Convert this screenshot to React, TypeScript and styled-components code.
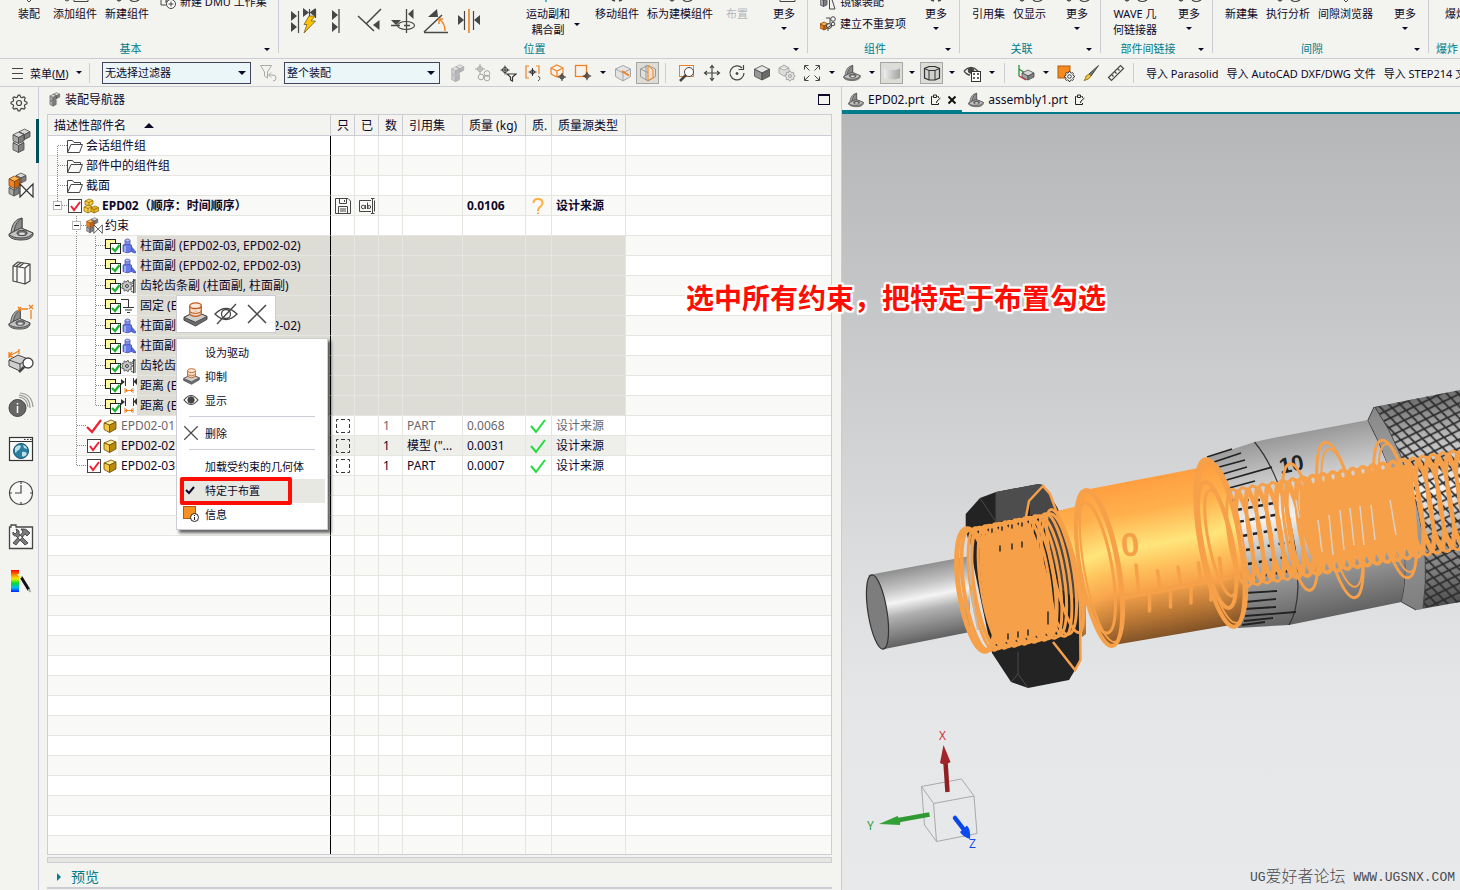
import React from 'react';
import styled, { createGlobalStyle, css } from 'styled-components';

const c = {
  bg: '#f3f4ef',
  line: '#cbccd4',
  grid: '#e6e6e1',
  ink: '#0d0828',
  teal: '#007c8c',
  select: '#dddcd5',
  orange: '#f6a04a',
  icon: '#464646',
};

const Global = createGlobalStyle`
  * { box-sizing: border-box; }
  body { margin: 0; background: ${c.bg}; }
  body, button, select, input, table {
    font-family: "Noto Sans", "Noto Sans CJK SC", sans-serif;
    color: ${c.ink};
  }
  button { border: 0; background: none; padding: 0; margin: 0; font-size: 11px; }
  svg { display: block; flex: none; }
`;

const Shell = styled.div`
  position: relative;
  display: flex;
  flex-direction: column;
  height: 100vh;
  overflow: hidden;
`;

/* ---------- small drawing helpers ---------- */

type IcoProps = { w?: number; h?: number; vb?: string; children: React.ReactNode };
const Ico = ({ w = 18, h, vb, children }: IcoProps) => (
  <svg width={w} height={h ?? w} viewBox={vb ?? `0 0 ${w} ${h ?? w}`} fill="none" stroke={c.icon} strokeWidth="1" aria-hidden="true">
    {children}
  </svg>
);

type IsoProps = { x: number; y: number; w: number; h: number; top?: string; left?: string; right?: string; line?: string };
const Iso = ({ x, y, w, h, top = '#d9d9d9', left = '#a9a9a9', right = '#7f7f7f', line = '#4a4a4a' }: IsoProps) => {
  const q = w / 4;
  const m = x + w / 2;
  return (
    <g stroke={line} strokeWidth="0.8" strokeLinejoin="round">
      <polygon fill={top} points={`${x},${y + q} ${m},${y} ${x + w},${y + q} ${m},${y + 2 * q}`} />
      <polygon fill={left} points={`${x},${y + q} ${m},${y + 2 * q} ${m},${y + 2 * q + h} ${x},${y + q + h}`} />
      <polygon fill={right} points={`${x + w},${y + q} ${m},${y + 2 * q} ${m},${y + 2 * q + h} ${x + w},${y + q + h}`} />
    </g>
  );
};

const amber = { top: '#ffb24d', left: '#f58220', right: '#c9620c', line: '#7a4a1c' };
const gold = { top: '#ffe88a', left: '#f7c32e', right: '#b98508', line: '#6e4d05' };
const pale = { top: '#e3e3e3', left: '#cccccc', right: '#b5b5b5', line: '#a6a6a6' };

/* an upright column of two blocks with a third behind it at the top */
const BlockArt = ({ tone }: { tone?: typeof pale }) => (
  <g>
    <Iso x={11} y={1} w={11} h={5} {...tone} />
    <Iso x={5} y={12} w={11} h={7} {...tone} />
    <Iso x={5} y={4} w={11} h={6} {...tone} />
  </g>
);
const Blocks = ({ w = 26 }: { w?: number }) => (
  <Ico w={w} vb="0 0 26 26"><BlockArt /></Ico>
);

const ConstraintArt = ({ w = 26 }: { w?: number }) => (
  <Ico w={w} vb="0 0 26 26">
    <Iso x={8} y={1} w={10} h={5} />
    <Iso x={1} y={13} w={10} h={6} />
    <Iso x={1} y={4} w={11} h={7} {...amber} />
    <path d="M12 12V25L25 12V25Z" fill="#fff" stroke="#333" strokeWidth="1.2" />
  </Ico>
);

const BracketArt = () => (
  <g stroke="#4a4a4a" strokeLinejoin="round">
    <path d="M3 18C3 10 7 4 11 3L14 2V13L5 19Z" fill="#a9a9a9" />
    <path d="M6 18C6 11 9 5 14 2V13Z" fill="#8b8b8b" />
    <path d="M1 18L13 12L25 17V19Q23 24 13 24Q4 24 1 20Z" fill="#8c8c8c" />
    <path d="M1 18L13 12L25 17Q22 22 13 22Q4 22 1 18Z" fill="#c4c4c4" />
    <ellipse cx="14" cy="17" rx="5" ry="2.6" fill="#6d6d6d" />
    <ellipse cx="14" cy="17.8" rx="3" ry="1.3" fill="#ddd" stroke="none" />
  </g>
);
const Bracket = ({ w = 26 }: { w?: number }) => (
  <Ico w={w} vb="0 0 26 26"><BracketArt /></Ico>
);

const gearPath = (cx: number, cy: number, r: number, n = 8) => {
  const pts: string[] = [];
  for (let i = 0; i < n * 4; i++) {
    const a = ((i - 0.5) / (n * 4)) * Math.PI * 2;
    const rr = i % 4 < 2 ? r : r * 0.76;
    pts.push(`${(cx + rr * Math.cos(a)).toFixed(2)},${(cy + rr * Math.sin(a)).toFixed(2)}`);
  }
  return pts.join(' ');
};

const Target = ({ x, y, r = 3 }: { x: number; y: number; r?: number }) => (
  <g stroke="#333">
    <circle cx={x} cy={y} r={r} />
    <path d={`M${x - r - 2} ${y}H${x + r + 2}M${x} ${y - r - 2}V${y + r + 2}`} />
  </g>
);

/* ---------- ribbon ---------- */

const Ribbon = styled.header`
  display: flex;
  flex: none;
  height: 59px;
  border-bottom: 1px solid ${c.line};
  overflow: hidden;
`;
const Group = styled.section<{ $w?: number }>`
  position: relative;
  flex: ${p => (p.$w ? `0 0 ${p.$w}px` : '1 0 90px')};
  display: flex;
  flex-direction: column;
  &::after {
    content: '';
    position: absolute;
    right: 0;
    top: 0;
    height: 53px;
    border-right: 1px solid ${c.line};
  }
`;
const GroupBody = styled.div<{ $pad?: number }>`
  display: flex;
  height: 41px;
  padding: 0 4px 0 ${p => p.$pad ?? 8}px;
`;
const GroupFoot = styled.div`
  display: flex;
  align-items: center;
  height: 16px;
  padding-right: 7px;
`;
const GroupName = styled.h2`
  flex: 1;
  margin: 0;
  text-align: center;
  font-size: 11px;
  font-weight: 400;
  line-height: 16px;
  white-space: nowrap;
  color: ${c.teal};
`;
const Tri = styled.i`
  display: block;
  flex: none;
  border: 3px solid transparent;
  border-top-color: ${c.ink};
  border-bottom-width: 0;
  align-self: center;
`;
const FootTri = styled(Tri)`
  margin: 0 2px 0 3px;
`;
const Tool = styled.button<{ $last?: boolean; $off?: boolean }>`
  display: flex;
  flex-direction: column;
  align-items: center;
  min-width: 40px;
  height: 41px;
  padding: 0 4px;
  line-height: 16px;
  white-space: nowrap;
  color: ${p => (p.$off ? '#b4b4bb' : c.ink)};
  margin-left: ${p => (p.$last ? 'auto' : 0)};
  svg { height: 6px; }
`;
const ToolArrow = styled(Tri)`
  margin-top: 5px;
`;
const SideArrow = styled(Tri)`
  margin: 8px 11px 0 0;
`;
const Stack = styled.div<{ $gap: number }>`
  display: flex;
  flex-direction: column;
  padding-left: ${p => p.$gap}px;
  margin-top: -6px;
`;
const SmallTool = styled.button`
  display: flex;
  align-items: center;
  gap: 4px;
  height: 16px;
  line-height: 16px;
  white-space: nowrap;
  & + & { margin-top: 6px; }
`;
const ConstraintTools = styled.div`
  display: flex;
  gap: 6px;
  padding: 8px 40px 0 0;
  height: 36px;
  button { width: 27px; height: 26px; display: flex; justify-content: center; }
`;

const Stub = ({ kind }: { kind: 'none' | 'arrow' | 'box' | 'round' | 'arrowBox' | 'blue' | 'dots' }) => (
  <svg width="30" height="6" viewBox="0 0 30 6" fill="none" stroke="#444" aria-hidden="true">
    {kind === 'arrow' && <path d="M13 0L15 2L17 0" />}
    {kind === 'box' && <path d="M11 0V1.500H26V0" />}
    {kind === 'arrowBox' && <path d="M5 0L7 1L9 0M14 0V1.500H28V0" />}
    {kind === 'round' && <path d="M5 0L7 1L9 0M18 0Q22 3 27 0" strokeWidth="1.2" />}
    {kind === 'blue' && <path d="M13 0V2" stroke="#1ba3c6" strokeWidth="1.5" />}
    {kind === 'dots' && <path d="M10 0L13 1M17 1L20 0" strokeWidth="1.5" />}
  </svg>
);

const PLAY = '#474747';
const constraintArt = [
  <Ico key="a" w={26} h={26}>
    <g fill={PLAY} stroke="none">
      <path d="M0 3L6 8L0 13ZM0 14L6 19L0 24ZM12 0L18 4.500L12 9ZM24.500 0L18.500 4.500L24.500 9Z" />
    </g>
    <path d="M7.500 3V25M18.500 1V12M24.500 1V10" stroke={PLAY} strokeWidth="1.2" />
    <path d="M18 8H24L20 13H24.500L13 25L16 16.500H13Z" fill="#ffc400" stroke="#7a5c1a" strokeWidth="0.8" />
  </Ico>,
  <Ico key="b" w={12} h={26}>
    <path d="M1 2L7 7L1 12ZM1 14L7 19L1 24Z" fill={PLAY} stroke="none" />
    <path d="M8 1V25" stroke={PLAY} strokeWidth="1.3" />
  </Ico>,
  <Ico key="c" w={26} h={26}>
    <path d="M1 8L17 23M9 16L24 1" stroke={PLAY} strokeWidth="1.5" />
    <path d="M16 17L22.500 12V22Z" fill={PLAY} stroke="none" />
  </Ico>,
  <Ico key="d" w={26} h={26}>
    <path d="M16.500 1V25M1 17.500H10M14 17.500H20" stroke={PLAY} strokeWidth="1.3" />
    <ellipse cx="16" cy="17.500" rx="8.500" ry="4" stroke={PLAY} strokeWidth="1.2" />
    <path d="M23.500 1V11L18 6ZM1 12H11L6 17Z" fill={PLAY} stroke="none" />
  </Ico>,
  <Ico key="e" w={26} h={26}>
    <path d="M1 24.500H25M1 24L19 7" stroke={PLAY} strokeWidth="1.5" />
    <path d="M5 9L14 1L15 9Z" fill={PLAY} stroke="none" />
    <path d="M22 23C22 18 20 14 17 12M16 16V11H20" stroke="#f08020" strokeWidth="1.4" />
  </Ico>,
  <Ico key="f" w={26} h={26}>
    <path d="M2 7L8 12L2 17ZM24 7L18 12L24 17Z" fill={PLAY} stroke="none" />
    <path d="M8.500 3V22M17.500 3V22" stroke={PLAY} strokeWidth="1.2" />
    <path d="M13 1V25" stroke="#f08020" strokeWidth="1.6" />
  </Ico>,
];

const More = ({ kind = 'dots' }: { kind?: 'none' | 'box' | 'round' | 'dots' }) => (
  <Tool $last>
    <Stub kind={kind} />
    更多
    <ToolArrow />
  </Tool>
);

const Foot = ({ name }: { name: string }) => (
  <GroupFoot>
    <GroupName>{name}</GroupName>
    <FootTri />
  </GroupFoot>
);

const BoomName = styled(GroupName)`
  text-align: left;
  padding-left: 7px;
`;

const RibbonBar = () => (
  <Ribbon>
    <Group $w={279}>
      <GroupBody $pad={9}>
        <Tool><Stub kind="arrow" />装配</Tool>
        <Tool><Stub kind="arrowBox" />添加组件</Tool>
        <Tool><Stub kind="round" />新建组件</Tool>
        <Stack $gap={7}>
          <SmallTool>
            <Ico w={16}>
              <path d="M1 6V11H6M6 5V9M6 7H10" />
              <circle cx="11" cy="10" r="4.500" fill="#fff" />
              <path d="M8.500 10H13.500M11 7.500V12.500" />
            </Ico>
            新建 DMU 工作集
          </SmallTool>
        </Stack>
      </GroupBody>
      <Foot name="基本" />
    </Group>
    <Group $w={529}>
      <GroupBody $pad={11}>
        <ConstraintTools>
          {constraintArt.map((a, i) => <button key={i} aria-label={`约束 ${i + 1}`}>{a}</button>)}
        </ConstraintTools>
        <Tool><Stub kind="blue" />运动副和<span>耦合副</span></Tool>
        <SideArrow />
        <Tool><Stub kind="dots" />移动组件</Tool>
        <Tool><Stub kind="round" />标为建模组件</Tool>
        <Tool $off><Stub kind="none" />布置</Tool>
        <More kind="box" />
      </GroupBody>
      <Foot name="位置" />
    </Group>
    <Group $w={152}>
      <GroupBody>
        <Stack $gap={4}>
          <SmallTool>
            <Ico w={16}>
              <Iso x={0} y={3} w={7} h={6} />
              <path d="M9.500 2V15L15 15L11.500 4" />
            </Ico>
            镜像装配
          </SmallTool>
          <SmallTool>
            <Ico w={16}>
              <Iso x={0} y={6} w={8} h={4} {...amber} />
              <circle cx="9" cy="10" r="2.500" fill="#ddd" />
              <circle cx="13" cy="3" r="2.300" />
              <circle cx="13" cy="8" r="1.800" />
              <path d="M6 2H10V7M7 12L12 9M8 13V15" />
            </Ico>
            建立不重复项
          </SmallTool>
        </Stack>
        <More />
      </GroupBody>
      <Foot name="组件" />
    </Group>
    <Group $w={141}>
      <GroupBody>
        <Tool><Stub kind="none" />引用集</Tool>
        <Tool><Stub kind="round" />仅显示</Tool>
        <More kind="round" />
      </GroupBody>
      <Foot name="关联" />
    </Group>
    <Group $w={112}>
      <GroupBody>
        <Tool><Stub kind="round" />WAVE 几<span>何链接器</span></Tool>
        <More kind="round" />
      </GroupBody>
      <Foot name="部件间链接" />
    </Group>
    <Group $w={216}>
      <GroupBody>
        <Tool><Stub kind="none" />新建集</Tool>
        <Tool><Stub kind="round" />执行分析</Tool>
        <Tool><Stub kind="arrow" />间隙浏览器</Tool>
        <More kind="none" />
      </GroupBody>
      <Foot name="间隙" />
    </Group>
    <Group>
      <GroupBody $pad={12}>
        <Tool><Stub kind="arrow" />爆炸图</Tool>
      </GroupBody>
      <GroupFoot>
        <BoomName>爆炸</BoomName>
      </GroupFoot>
    </Group>
  </Ribbon>
);

/* ---------- selection toolbar ---------- */

const Bar = styled.nav`
  display: flex;
  align-items: center;
  flex: none;
  height: 28px;
  border-bottom: 1px solid ${c.line};
  overflow: hidden;
`;
const Rule = styled.i<{ $l?: number; $r?: number }>`
  flex: none;
  width: 1px;
  height: 20px;
  background: ${c.line};
  margin: 0 ${p => p.$r ?? 8}px 0 ${p => p.$l ?? 5}px;
`;
const MenuButton = styled.button`
  display: flex;
  align-items: center;
  gap: 7px;
  width: 89px;
  flex: none;
  padding-left: 12px;
  white-space: nowrap;
`;
const Pick = styled.label<{ $w: number }>`
  position: relative;
  flex: none;
  width: ${p => p.$w}px;
  ${Tri} {
    position: absolute;
    right: 5px;
    top: 9px;
    border-width: 4px 4px 0;
    pointer-events: none;
  }
`;
const Select = styled.select`
  display: block;
  appearance: none;
  width: 100%;
  height: 22px;
  padding: 0 16px 0 2px;
  border: 1px solid #44435f;
  border-radius: 0;
  background: #eaf6f8;
  font-size: 11px;
`;
const FilterButton = styled.button`
  flex: none;
  display: flex;
  align-items: center;
  justify-content: center;
  width: 33px;
  height: 22px;
`;
const IconBtn = styled.button<{ $on?: boolean }>`
  display: flex;
  flex: none;
  align-items: center;
  justify-content: center;
  width: 23px;
  height: 22px;
  margin: 0 1px;
  ${p => p.$on && css`
    background: ${c.select};
    border: 1px solid #a5a6a8;
  `}
`;
const Drop = styled.button`
  display: flex;
  flex: none;
  justify-content: center;
  width: 15px;
  height: 22px;
`;
const TextBtn = styled.button`
  flex: none;
  margin-left: 8px;
  white-space: nowrap;
`;
const Spacer = styled.i`
  flex: none;
  width: 5px;
`;

const I = ({ n, on, children }: { n: string; on?: boolean; children: React.ReactNode }) => (
  <IconBtn aria-label={n} $on={on}><Ico>{children}</Ico></IconBtn>
);
const D = ({ n }: { n: string }) => <Drop aria-label={n}><Tri /></Drop>;

const hex = 'M9 1.500L16.500 5V12.500L9 17L1.500 12.500V5Z';

const Toolbar = () => (
  <Bar>
    <MenuButton>
      <Ico w={11} h={12}><path d="M0 1.500H11M0 6.500H11M0 11.500H11" /></Ico>
      <span>菜单(<u>M</u>)</span>
      <Tri />
    </MenuButton>
    <Rule $l={0} $r={12} />
    <Pick $w={149}>
      <Select aria-label="选择过滤器"><option>无选择过滤器</option></Select>
      <Tri />
    </Pick>
    <FilterButton aria-label="重置过滤器">
      <Ico>
        <path d="M1.500 1.500H12.500L8.500 8V14L5.500 12V8Z" stroke="#a9a9a9" />
        <path d="M10 11H14Q17 11 17 14T14 17M12 8.500L9.500 11L12 13.500" stroke="#a9a9a9" />
      </Ico>
    </FilterButton>
    <Pick $w={156}>
      <Select aria-label="选择范围"><option>整个装配</option></Select>
      <Tri />
    </Pick>
    <Spacer />
    <I n="块"><g transform="translate(-1 0) scale(.72)"><BlockArt tone={pale} /></g></I>
    <I n="相交">
      <g stroke="#a4a4a4"><circle cx="6" cy="5" r="2.500" /><path d="M1 5H11M6 0V10" /><circle cx="7" cy="13" r="2.800" /><circle cx="13" cy="9.500" r="2.800" /><circle cx="13" cy="14" r="2.800" /></g>
    </I>
    <I n="点过滤器"><Target x={6} y={6} r={2.5} /><path d="M8 10H17L13.500 13V17L11.500 16V13Z" fill="#fff" stroke="#333" strokeWidth="1.2" /></I>
    <I n="区域"><path d="M5 2H2V14H5M12 2H15V10" stroke="#f08020" strokeWidth="1.2" /><Target x={8.5} y={8} r={2} /><path d="M14 12Q18 14 14 17" /></I>
    <I n="体"><path d="M8 1L14 4V10L8 13L2 10V4ZM2 4L8 7L14 4M8 7V13" stroke="#f08020" strokeWidth="1.2" /><Target x={13} y={13} r={2} /></I>
    <I n="矩形"><rect x="1.500" y="1.500" width="11" height="11" stroke="#f08020" strokeWidth="1.3" /><Target x={13} y={12} r={2.2} /></I>
    <D n="矩形选项" />
    <I n="剖切"><path d={hex} fill="#e4e4e4" stroke="#a5a5a5" /><path d="M1.500 5L9 9L16.500 5M9 9V17" stroke="#a5a5a5" /><path d="M8 7L15 11.500" stroke="#f08020" strokeWidth="2" /></I>
    <I n="编辑剖切" on><path d={hex} fill="#e0e0dc" stroke="#999" /><path d="M1.500 5L9 8.500M7 1V16" stroke="#999" /><path d="M9 1.500L14 6V14L9 16.500Z" stroke="#f08020" fill="#efe0d0" /></I>
    <Rule />
    <I n="缩放"><rect x="1.500" y="1.500" width="14" height="11" stroke="#f08020" /><circle cx="11" cy="8" r="4.500" fill="#fff" /><path d="M8 11L2 17" strokeWidth="2.500" /></I>
    <I n="平移"><path d="M9 1.500V16.500M1.500 9H16.500M7 4L9 1.500L11 4M7 14L9 16.500L11 14M4 7L1.500 9L4 11M14 7L16.500 9L14 11" strokeWidth="1.2" /></I>
    <I n="旋转"><path d="M14 4A7 7 0 1 0 16 9M10.500 5.500H15.500V1" strokeWidth="1.2" /><circle cx="9" cy="9.500" r="1" fill="#444" /></I>
    <I n="视图"><Iso x={1.5} y={1.5} w={15} h={7} top="#e6e6e6" left="#979797" right="#6b6b6b" /></I>
    <I n="视图设置"><path d="M6 1L11 4V9L6 12L1 9V4ZM1 4L6 6L11 4" stroke="#a9a9a9" fill="#ddd" /><polygon points={gearPath(12, 12, 5)} stroke="#a4a4a4" fill="#e4e4e4" /><circle cx="12" cy="12" r="1.500" stroke="#a4a4a4" /></I>
    <I n="适合窗口"><path d="M1.500 5.500V1.500H5.500M12.500 1.500H16.500V5.500M16.500 12.500V16.500H12.500M5.500 16.500H1.500V12.500M2 2L6.500 6.500M16 2L11.500 6.500M16 16L11.500 11.500M2 16L6.500 11.500" /></I>
    <D n="适合窗口选项" />
    <I n="部件"><g transform="scale(.69)"><BracketArt /></g></I>
    <D n="部件选项" />
    <I n="着色" on>
      <path d="M1 4V14Q9 17 17 14V4Z" fill="url(#shade)" stroke="none" />
      <ellipse cx="9" cy="4" rx="8" ry="2" fill="#dcdcdc" stroke="none" />
      <defs><linearGradient id="shade"><stop stopColor="#ededed" /><stop offset="1" stopColor="#a2a2a2" /></linearGradient></defs>
    </I>
    <D n="着色选项" />
    <I n="边" on><path d="M1.500 4.500V14L6 16H12L16.500 14V4.500L12 2.500H6Z" fill="#d0d0cc" stroke="#333" strokeWidth="1.2" /><path d="M1.500 4.500L6 6.500H12L16.500 4.500M6 6.500V16M12 6.500V16" stroke="#333" /></I>
    <D n="边选项" />
    <I n="显示隐藏"><path d="M1 7Q8 0 15 7M1 7Q4 11 7 11" strokeWidth="1.3" /><circle cx="8" cy="6.500" r="2.800" fill="#444" /><rect x="8.500" y="7.500" width="9" height="10" fill="#fff" stroke="#333" /><path d="M10 10H12M14 10H16M10 14H12M14 14H16" stroke="#333" strokeWidth="1.500" /></I>
    <D n="显示隐藏选项" />
    <Rule />
    <I n="方位"><path d="M2 1V12M2 5L8 9" stroke="#2a8f3c" strokeWidth="1.3" /><path d="M2 12L9 16" stroke="#d23" strokeWidth="1.3" /><Iso x={5} y={6} w={12} h={4} /></I>
    <D n="方位选项" />
    <I n="首选项"><rect x="1" y="2" width="12" height="12" fill="#f58a1f" stroke="#b35c0a" /><polygon points={gearPath(12.5, 12.5, 5)} fill="#fff" stroke="#333" /><circle cx="12.500" cy="12.500" r="1.800" stroke="#333" /></I>
    <I n="画笔"><path d="M16.500 1.500L7 10L9 12Z" fill="#777" /><path d="M7 10L9 12Q7 16 2 16.500Q4 14 4 12Z" fill="#f3c13a" stroke="#80651a" strokeWidth="0.8" /></I>
    <I n="测量"><path d="M1.500 13.500L13.500 1.500L16.500 4.500L4.500 16.500ZM5 11L6.500 12.500M8 8L9.500 9.500M11 5L12.500 6.500" strokeWidth="1.2" /></I>
    <Rule $r={4} />
    <TextBtn>导入 Parasolid</TextBtn>
    <TextBtn>导入 AutoCAD DXF/DWG 文件</TextBtn>
    <TextBtn>导入 STEP214 文件</TextBtn>
  </Bar>
);

/* ---------- resource bar ---------- */

const Rail = styled.aside`
  display: flex;
  flex-direction: column;
  align-items: stretch;
  flex: none;
  width: 39px;
  border-right: 1px solid ${c.line};
`;
const RailBtn = styled.button<{ $first?: boolean; $on?: boolean }>`
  display: flex;
  flex: none;
  align-items: center;
  justify-content: center;
  height: ${p => (p.$first ? 32 : 44)}px;
  padding-left: ${p => (p.$first ? 0 : 4)}px;
  ${p => p.$on && css`
    margin-right: -1px;
    padding-right: 1px;
    box-shadow: inset -3px 0 #00515c;
  `}
`;

const RailBar = () => (
  <Rail>
    <RailBtn $first aria-label="设置"><Ico><polygon points={gearPath(9, 9, 8)} strokeLinejoin="round" strokeWidth="1.2" /><circle cx="9" cy="9" r="2.500" strokeWidth="1.2" /></Ico></RailBtn>
    <RailBtn $on aria-label="装配导航器"><Blocks /></RailBtn>
    <RailBtn aria-label="约束导航器"><ConstraintArt /></RailBtn>
    <RailBtn aria-label="部件导航器"><Bracket /></RailBtn>
    <RailBtn aria-label="重用库">
      <Ico w={26}><path d="M5 6L10 2L22 4V21L17 24M5 6L17 8V24L5 21ZM17 8L22 4M8 6.500L13 2.500M11 7L16 3M9 7V22" fill="#f8f8f6" strokeWidth="1.2" strokeLinejoin="round" /></Ico>
    </RailBtn>
    <RailBtn aria-label="视图管理器">
      <Ico w={26}><g transform="translate(0 4) scale(.88)"><BracketArt /></g><path d="M10 3L13 7M10 7L13 3M13 5H20M21 1L25 5M21 5L25 1M23 6V15" stroke="#f08020" strokeWidth="1.3" /></Ico>
    </RailBtn>
    <RailBtn aria-label="检查">
      <Ico w={26}><path d="M1 12L10 7L20 11V17L12 23L1 18Z" fill="#cfcfcf" /><path d="M1 12L12 16L20 11M12 16V23" /><path d="M1 10V4M1 8L11 3M11 1V6M1 8L4 4M1 8L5 9" stroke="#f08020" strokeWidth="1.3" /><circle cx="20" cy="15" r="5" fill="#fff" strokeWidth="1.3" /><path d="M16 19L11 24" strokeWidth="2.500" /></Ico>
    </RailBtn>
    <RailBtn aria-label="信息">
      <Ico w={26}><circle cx="9.500" cy="16" r="8.500" fill="#676767" /><path d="M9.500 14V21M9.500 11V12.500" stroke="#fff" strokeWidth="1.500" /><path d="M11 5Q19 6 20 15M11 3Q22 4 22 16M12 1Q24 2 25 15" stroke="#9a9a9a" strokeWidth="1.2" /></Ico>
    </RailBtn>
    <RailBtn aria-label="网页">
      <Ico w={26}><rect x="1.500" y="1.500" width="23" height="23" fill="#fafafa" stroke="#333" strokeWidth="1.2" /><path d="M1.500 5.500H24.500" stroke="#333" /><path d="M16 3.500H17.500M19 3.500H20.500M22 3.500H23.500" stroke="#333" /><circle cx="13" cy="15" r="7.500" fill="#2a7ea0" stroke="#1a5670" /><path d="M7 12Q10 8 13 10Q12 14 9 15Q8 18 7 16ZM14 16Q18 15 19 18Q16 22 14 20ZM15 9Q19 10 19 13L16 12Z" fill="#bfe0ea" stroke="none" /></Ico>
    </RailBtn>
    <RailBtn aria-label="历史记录">
      <Ico w={26}><circle cx="13" cy="13" r="11.500" fill="#f8f8f6" strokeWidth="1.2" /><path d="M13 5V13H7M13 1.500V4M13 22V24.500M1.500 13H4M22 13H24.500" strokeWidth="1.2" /></Ico>
    </RailBtn>
    <RailBtn aria-label="加工向导">
      <Ico w={26}><path d="M1.500 24.500V3H3V1H8V3H24.500V24.500Z" fill="#fafafa" strokeWidth="1.3" /><path d="M5 8Q4 12 8 12L17 21L20 19L11 10Q12 6 8 5L9 8L7 10ZM13 5Q18 4 21 8L22 9L19 12L17 10L8 21L5 19L15 8Z" fill="#7b7b7b" stroke="#333" strokeWidth="0.8" /></Ico>
    </RailBtn>
    <RailBtn aria-label="角色">
      <Ico w={26}><defs><linearGradient id="rb" x2="0" y2="1"><stop stopColor="#f00" /><stop offset=".25" stopColor="#f90" /><stop offset=".4" stopColor="#ee0" /><stop offset=".6" stopColor="#0d3" /><stop offset=".8" stopColor="#0be" /><stop offset="1" stopColor="#02f" /></linearGradient></defs><rect x="3" y="2" width="8" height="22" fill="url(#rb)" stroke="none" /><path d="M13 9L21 22" stroke="#111" strokeWidth="3" /><path d="M10 6L13 10" stroke="#f6f0a0" strokeWidth="2" /><path d="M20.500 21L22.500 24" stroke="#aaa" strokeWidth="2" /></Ico>
    </RailBtn>
  </Rail>
);

/* ---------- assembly navigator ---------- */

const Main = styled.main`
  display: flex;
  flex: 1;
  min-height: 0;
`;
const Dock = styled.section`
  display: flex;
  flex-direction: column;
  flex: 0 0 802px;
  padding: 0 9px 1px 8px;
`;
const DockTitle = styled.div`
  display: flex;
  align-items: center;
  justify-content: space-between;
  height: 27px;
  padding-bottom: 3px;
  h1 {
    display: flex;
    align-items: center;
    gap: 3px;
    margin: 0;
    font-size: 12px;
    font-weight: 400;
  }
`;
const MaxBtn = styled.button`
  width: 12px;
  height: 11px;
  margin-right: 2px;
  border: 1px solid ${c.ink};
  border-top-width: 2px;
`;
const TreeBox = styled.div`
  flex: 1;
  min-height: 0;
  overflow: hidden;
  border: 1px solid ${c.line};
  background: #fff;
`;
const Tree = styled.table`
  width: 100%;
  table-layout: fixed;
  border-collapse: separate;
  border-spacing: 0;
  font-size: 12px;
  line-height: 19px;
  th, td {
    padding: 0;
    font-weight: inherit;
    text-align: left;
    white-space: nowrap;
    overflow: hidden;
  }
`;
const Th = styled.th`
  height: 21px;
  background: ${c.bg};
  border-right: 1px solid ${c.line};
  border-bottom: 1px solid ${c.line};
  && { padding-left: 6px; }
  &:last-child { border-right: 0; }
`;
const Row = styled.tr<{ $sel?: boolean; $hot?: boolean; $bold?: boolean; $dim?: boolean }>`
  height: 20px;
  background: #fff;
  font-weight: ${p => (p.$bold ? 700 : 400)};
  color: ${p => (p.$dim ? '#68686c' : c.ink)};
  &:nth-child(even) { background: #f9f9f7; }
  td {
    height: 20px;
    border-bottom: 1px solid ${c.grid};
    border-right: 1px solid ${c.grid};
    ${p => p.$sel && `background: ${c.select};`}
    ${p => p.$hot && 'background: #eeeeea;'}
  }
  td + td { padding-left: 4px; }
  td:first-child { border-right-color: #000; background: none; }
  td:last-child { border-right: 0; background: none; }
`;
const Name = styled.div<{ $fill?: string }>`
  display: flex;
  align-items: center;
  height: 19px;
  > span:last-child {
    flex: 1;
    padding-left: 3px;
    background: ${p => p.$fill ?? 'none'};
  }
`;
const SortTri = styled.i`
  display: inline-block;
  margin: 0 0 2px 18px;
  border: 5px solid transparent;
  border-bottom-color: ${c.ink};
  border-top-width: 0;
`;
const Slot = styled.span`
  display: flex;
  flex: none;
  align-items: center;
  justify-content: center;
  width: 16px;
  height: 19px;
`;
const Check = styled.label<{ $box?: boolean }>`
  position: relative;
  flex: none;
  width: 16px;
  height: 19px;
  input {
    appearance: none;
    display: block;
    width: 14px;
    height: 14px;
    margin: 3px 1px 0;
    border: ${p => (p.$box === false ? 'none' : '1px solid #444')};
    background: ${p => (p.$box === false ? 'none' : '#fff')};
  }
  svg { position: absolute; left: 0; top: 2px; pointer-events: none; }
`;

const RedCheck = ({ label, box }: { label: string; box?: boolean }) => (
  <Check $box={box}>
    <input type="checkbox" defaultChecked aria-label={label} />
    <Ico w={16}>
      {box === false
        ? <path d="M1 9L6 14L15 2" stroke="#ee2233" strokeWidth="2.2" />
        : <path d="M4 8L7 12L13 4" stroke="#ee2233" strokeWidth="2" />}
    </Ico>
  </Check>
);

type G = ' ' | '|' | '+' | 'r' | 'L' | 'e' | 'E';
const Guide = ({ g }: { g: G }) => (
  <svg width="19" height="19" fill="none" stroke="#8a8a8a" strokeDasharray="1 1" aria-hidden="true">
    {(g === '|' || g === '+') && <path d="M9.500 0V19" />}
    {g === 'r' && <path d="M9.500 10V19" />}
    {(g === 'L' || g === 'e') && <path d="M9.500 0V10" />}
    {g === 'E' && <path d="M9.500 0V5M9.500 15V19" />}
    {g !== ' ' && g !== '|' && <path d="M10 9.500H19" />}
    {(g === 'e' || g === 'E') && (
      <g strokeDasharray="none">
        <rect x="5.500" y="5.500" width="8" height="8" fill="#fff" stroke="#b7b7bd" />
        <path d="M7 9.500H12" stroke="#222" />
      </g>
    )}
  </svg>
);

const Folder = () => <Ico w={16}><path d="M.5 14.500V2.500H5.500L7 4.500H13.500V6.500M.5 14.500L4 6.500H15.500L12.500 14.500Z" strokeLinejoin="round" /></Ico>;
const Status = () => (
  <Ico w={16}>
    <rect x=".5" y="1.500" width="10" height="9" fill="#fff9a0" stroke="#222" />
    <rect x="5.500" y="5.500" width="10" height="10" fill="#fff" stroke="#222" />
    <path d="M7 10L10 13L14.500 7" stroke="#17b52c" strokeWidth="2.2" />
  </Ico>
);
const Cyl = () => (
  <Ico w={16}>
    <g stroke="#3b49a8" strokeWidth="0.7">
      <path d="M9 7L14.500 13.500V15L12 14.500L8 11Z" fill="#5b6de0" />
      <path d="M4 2.500H9V8H4Z" fill="#8d9bee" />
      <path d="M2 7Q6 5.500 10.500 7V13.500Q6.500 16 2 13.500Z" fill="#6879e6" />
      <path d="M4 8V14" stroke="#b5bff8" strokeWidth="1.5" />
      <ellipse cx="6.500" cy="2.500" rx="2.500" ry="1.500" fill="#b5bff8" />
    </g>
  </Ico>
);
const GearRack = () => (
  <Ico w={16}><polygon points={gearPath(6, 8, 5.5, 9)} fill="#ccc" stroke="#555" /><circle cx="6" cy="8" r="1.500" /><path d="M12.500 1V15M14 1V15" stroke="#444" /><path d="M14 2L11 4M13 6L11 5M13 9L12 10M13 15L10 13" stroke="#444" /></Ico>
);
const Ground = () => <Ico w={16}><path d="M0 1.500H7.500V9M2 9.500H13M4 12H11M6 14.500H9" stroke="#333" /></Ico>;
const Dist = () => (
  <Ico w={16}>
    <path d="M4.500 0V8M12.500 0V8" stroke="#333" /><path d="M0 1L4 4L0 7ZM16 0L12.500 3.500L16 7Z" fill="#333" stroke="none" />
    <path d="M4 10V15M12 10V15M4 12.500H12M6 11L4.500 12.500L6 14M10 11L11.500 12.500L10 14" stroke="#f08020" />
  </Ico>
);
const Part = () => (
  <Ico w={16}>
    <g stroke="#6b4c08" strokeWidth=".8" strokeLinejoin="round">
      <path d="M2 5L9 2L14 4L7.500 7Z" fill="#ffeb9a" /><path d="M2 5L7.500 7V14.500L2 11.500Z" fill="#f7c93c" /><path d="M14 4L7.500 7V14.500L14 11Z" fill="#b98a10" />
    </g>
  </Ico>
);
const Asm = () => (
  <Ico w={16}>
    <g stroke="#8a6406" strokeWidth=".7" strokeLinejoin="round">
      <path d="M2 3L6 1L10 2.500V6L6 8L2 6.500Z" fill="#f9cf4a" /><path d="M2 3L6 4.500L10 2.500M6 4.500V8" />
      <path d="M1 9L5 7L9 8.500V13L5 15L1 13Z" fill="#f9cf4a" /><path d="M1 9L5 10.500L9 8.500M5 10.500V15" />
      <path d="M8 10L12 8L15.500 9.500V13L11 15L8 13.500Z" fill="#e9b422" /><path d="M8 10L11 11.500L15.500 9.500M11 11.500V15" />
    </g>
  </Ico>
);

const Dashed = () => <Ico w={16}><rect x="1.500" y="1.500" width="13" height="13" stroke="#333" strokeDasharray="4 2.500" strokeDashoffset="2" /></Ico>;
const Green = () => <Ico w={16}><path d="M1 8L6 14L15 2" stroke="#20dc3a" strokeWidth="2" /></Ico>;
const Save = () => (
  <Ico w={16}><path d="M.5 .5H13L15.500 3V15.500H.5ZM4.500 .5V5.500H11.500V.5M9.500 2V4M3.500 15V8.500H12.500V15M5 11H11M5 13H11" /></Ico>
);
const Rename = () => (
  <Ico w={16}>
    <path d="M12 2.500H.5V13.500H12M13.500 1V15M12 .5H15.500M12 15.500H15.500M15.500 2.500V13.500" />
    <circle cx="4.200" cy="9" r="1.800" /><path d="M6.500 7V11M8.500 4.500V11" /><circle cx="10.200" cy="9" r="1.500" />
  </Ico>
);
const Question = () => (
  <Ico w={16}><path d="M3.500 5Q3.500 1 8 1T12.500 5Q12.500 7 10.500 8.500T8 12V13M8 14.500V16.500" stroke="#ffae42" strokeWidth="2" /></Ico>
);

type Rec = {
  g: G[]; text: string; icons: React.ReactNode[]; sel?: boolean; hot?: boolean; bold?: boolean; dim?: boolean;
  cells?: React.ReactNode[];
};
const joint = (text: string, art: React.ReactNode, last = false): Rec => ({
  g: [' ', '|', last ? 'L' : '+'], text, sel: true, icons: [<Status key="s" />, art],
});
const part = (text: string, ref: string, mass: string, extra: Partial<Rec>, box?: boolean, last = false): Rec => ({
  g: [' ', last ? 'L' : '+'], text, icons: [<RedCheck key="c" label={text} box={box} />, <Part key="p" />],
  cells: [<Dashed key="d" />, '', '1', ref, mass, <Green key="g" />, '设计来源'], ...extra,
});

const records: Rec[] = [
  { g: ['r'], text: '会话组件组', icons: [<Folder key="f" />] },
  { g: ['+'], text: '部件中的组件组', icons: [<Folder key="f" />] },
  { g: ['+'], text: '截面', icons: [<Folder key="f" />] },
  {
    g: ['e'], text: 'EPD02（顺序：时间顺序）', bold: true,
    icons: [<RedCheck key="c" label="EPD02" />, <Asm key="a" />],
    cells: [<Save key="s" />, <Rename key="r" />, '', '', '0.0106', <Question key="q" />, '设计来源'],
  },
  { g: [' ', 'E'], text: '约束', icons: [<ConstraintArt key="c" w={17} />] },
  joint('柱面副 (EPD02-03, EPD02-02)', <Cyl key="k" />),
  joint('柱面副 (EPD02-02, EPD02-03)', <Cyl key="k" />),
  joint('齿轮齿条副 (柱面副, 柱面副)', <GearRack key="k" />),
  joint('固定 (E', <Ground key="k" />),
  joint('柱面副 (EPD02-03, EPD02-02)', <Cyl key="k" />),
  joint('柱面副', <Cyl key="k" />),
  joint('齿轮齿', <GearRack key="k" />),
  joint('距离 (E', <Dist key="k" />),
  joint('距离 (E', <Dist key="k" />, true),
  part('EPD02-01', 'PART', '0.0068', { dim: true }, false),
  part('EPD02-02', '模型 ("...', '0.0031', { hot: true }),
  part('EPD02-03', 'PART', '0.0007', {}, undefined, true),
];
const blanks = Array.from({ length: 40 }, (_, i) => i);
const columns = [283, 24, 24, 24, 60, 63, 26, 74];

const Col = styled.col<{ $w?: number }>`
  width: ${p => (p.$w ? `${p.$w}px` : 'auto')};
`;
const Splitter = styled.div`
  flex: none;
  height: 6px;
  margin-top: 2px;
  border: 1px solid ${c.line};
  background: #e6e7e1;
`;
const Preview = styled.button`
  display: flex;
  flex: none;
  align-items: center;
  gap: 10px;
  height: 26px;
  padding: 4px 0 0 10px;
  border-bottom: 2px solid ${c.line};
  font-size: 14px;
  line-height: 20px;
  color: ${c.teal};
  &::before {
    content: '';
    border: 4px solid transparent;
    border-left-color: ${c.teal};
    border-right-width: 0;
  }
`;

const Navigator = () => (
  <Dock>
    <DockTitle>
      <h1><Blocks w={15} />装配导航器</h1>
      <MaxBtn aria-label="最大化" />
    </DockTitle>
    <TreeBox>
      <Tree>
        <colgroup>
          {columns.map((w, i) => <Col key={i} $w={w} />)}
          <Col />
        </colgroup>
        <thead>
          <tr>
            <Th>描述性部件名<SortTri /></Th>
            {['只', '已', '数', '引用集', '质量 (kg)', '质.', '质量源类型', ''].map((t, i) => <Th key={i}>{t}</Th>)}
          </tr>
        </thead>
        <tbody>
          {records.map((r, i) => (
            <Row key={i} $sel={r.sel} $hot={r.hot} $bold={r.bold} $dim={r.dim}>
              <td>
                <Name $fill={r.sel ? c.select : r.hot ? '#eeeeea' : undefined}>
                  {r.g.map((g, k) => <Guide key={k} g={g} />)}
                  {r.icons.map((ic, k) => <Slot key={k}>{ic}</Slot>)}
                  <span>{r.text}</span>
                </Name>
              </td>
              {Array.from({ length: 8 }, (_, k) => <td key={k}>{r.cells?.[k]}</td>)}
            </Row>
          ))}
          {blanks.map(i => (
            <Row key={`b${i}`}>
              {Array.from({ length: 9 }, (_, k) => <td key={k} />)}
            </Row>
          ))}
        </tbody>
      </Tree>
    </TreeBox>
    <Splitter />
    <Preview>预览</Preview>
  </Dock>
);

/* ---------- graphics window ---------- */

const View = styled.section`
  display: flex;
  flex-direction: column;
  flex: 1;
  min-width: 0;
  border-left: 1px solid ${c.line};
`;
const Tabs = styled.div`
  display: flex;
  flex: none;
  height: 27px;
  border-bottom: 2px solid ${c.teal};
`;
const Tab = styled.div<{ $on?: boolean }>`
  display: flex;
  align-items: center;
  gap: 6px;
  height: 25px;
  padding: 0 5px 0 6px;
  ${p => p.$on && `border-bottom: 2px solid ${c.teal}; padding-top: 2px;`}
  font-size: 12px;
  button { display: flex; font-size: 12px; align-items: center; gap: 4px; }
`;
const Canvas = styled.div`
  position: relative;
  flex: 1;
  min-height: 0;
  overflow: hidden;
  background: linear-gradient(#b5b6b8, #cbccce 33%, #dddee0 60%, #e5e6e8 76%, #e8e9eb);
`;
const Scene = styled.svg`
  width: 100%;
  height: 100%;
`;
const Mark = styled.p`
  position: absolute;
  right: 5px;
  bottom: 2px;
  margin: 0;
  display: flex;
  align-items: center;
  gap: 8px;
  font-family: "Liberation Mono", "Noto Sans CJK SC", monospace;
  font-size: 13px;
  line-height: 20px;
  color: #4a4b4d;
  span { display: flex; align-items: center; }
  b { font-weight: 300; font-size: 16px; line-height: 20px; }
`;

const Pin = () => (
  <Ico w={11}><path d="M8.500 4V2.500H7.500M2.500 2.500H1.500V10.500H8.500V9M3.500 3.500V1H6.500V3.500ZM6.500 9L7 7L10.500 4" stroke="#222" /></Ico>
);

const seq = (n: number) => Array.from({ length: n }, (_, i) => i);

const Loop = ({ x, y, rx, ry, a = -9, w = 3 }: { x: number; y: number; rx: number; ry: number; a?: number; w?: number }) => (
  <ellipse cx={x} cy={y} rx={rx} ry={ry} strokeWidth={w} transform={`rotate(${a} ${x} ${y})`} />
);

const Model = () => (
  <Scene aria-label="EPD02 模型">
    <defs>
      <linearGradient id="steel" gradientUnits="userSpaceOnUse" x1="910" y1="567" x2="925" y2="642">
        <stop stopColor="#8e8e8e" /><stop offset=".25" stopColor="#c5c5c5" /><stop offset=".42" stopColor="#f4f4f4" /><stop offset=".6" stopColor="#b0b0b0" /><stop offset="1" stopColor="#5f5f5f" />
      </linearGradient>
      <linearGradient id="brass" gradientUnits="userSpaceOnUse" x1="1145" y1="477" x2="1175" y2="636">
        <stop stopColor="#ff9e40" /><stop offset=".2" stopColor="#ffb04c" /><stop offset=".42" stopColor="#ffe57c" /><stop offset=".55" stopColor="#ffc25c" /><stop offset=".68" stopColor="#f9a54c" /><stop offset=".86" stopColor="#b87634" /><stop offset="1" stopColor="#7e5026" />
      </linearGradient>
      <linearGradient id="sleeve" gradientUnits="userSpaceOnUse" x1="1310" y1="432" x2="1346" y2="615">
        <stop stopColor="#9a9a9a" /><stop offset=".18" stopColor="#c3c3c3" /><stop offset=".42" stopColor="#f2f2f2" /><stop offset=".7" stopColor="#a0a0a0" /><stop offset="1" stopColor="#606060" />
      </linearGradient>
      <linearGradient id="grip" gradientUnits="userSpaceOnUse" x1="1410" y1="397" x2="1448" y2="608">
        <stop stopColor="#6a6a6a" /><stop offset=".2" stopColor="#b8b8b8" /><stop offset=".45" stopColor="#f4f4f4" /><stop offset=".75" stopColor="#909090" /><stop offset="1" stopColor="#4c4c4c" />
      </linearGradient>
      <pattern id="knurl" width="14" height="10" patternUnits="userSpaceOnUse" patternTransform="rotate(10)">
        <path d="M0 0L14 10M14 0L0 10" stroke="#2b2b2b" strokeWidth="1.8" fill="none" />
      </pattern>
    </defs>
    <g transform="translate(-842 -114)">
      {/* spindle */}
      <path d="M868.500 575L970 556V632L884.500 649Z" fill="url(#steel)" />
      <ellipse cx="877.500" cy="612" rx="9.500" ry="37.500" transform="rotate(-9 877.500 612)" fill="#7d7d7d" stroke="#333" strokeWidth="1.2" />
      {/* clamp nut */}
      <path d="M965.700 528V514L980 498L996 492L1038.500 484L1043.500 485L1057.500 508L1077 557L1081 660L1069 680L1028 688L1011 682L992 653Z" fill="#232323" />
      <path d="M996 492L1038.500 484L1043.500 486L1030 501L1026 517L996 522Z" fill="#4d4d4d" />
      <path d="M1043.500 486L1057.500 508L1074 557L1077 600L1062 590L1040 515L1030 515V501Z" fill="#474747" />
      <path d="M980 498L996 522M996 492V520M1018 652L1018 674L1028 688M1011 682L1018 674" stroke="#4b4b4b" fill="none" />
      {/* barrel */}
      <path d="M1057 511L1086 504V634L1082 637Q1080 560 1057 511Z" fill="url(#brass)" />
      <path d="M1084.500 490L1204 467L1231 625L1114 645Z" fill="url(#brass)" />
      {/* thimble */}
      <path d="M1203 459L1254.500 442L1268 439L1368 420Q1396 470 1404 540Q1408 580 1401.500 602L1289 625L1238 628Q1236 520 1203 459Z" fill="url(#sleeve)" />
      <path d="M1254.500 442C1278 470 1298 530 1298 587Q1297 612 1289 625M1368 420Q1400 480 1404 540Q1408 580 1401.500 602" fill="none" stroke="#333" strokeWidth="1.2" />
      <path d="M1207 457L1232 449M1211 463L1241 453M1215.500 468L1245 460M1219.500 475L1247 467M1223 481L1272 467M1225.500 489L1255 481M1245 593L1277 591M1245 602L1276 599M1245 609L1276 607M1245 616L1296 612M1244 621L1273 618M1242 625L1265 622" stroke="#222" strokeWidth="1.8" />
      <path d="M1232 500H1268M1236 510L1274 503M1238 522L1280 514M1242 536L1286 528M1246 550L1290 542M1248 564L1292 556M1250 578L1294 570" stroke="#222" strokeWidth="2.500" strokeDasharray="6 5" />
      <text x="1279" y="472" fontFamily="Liberation Sans" fontWeight="700" fontSize="22" fill="#222" transform="rotate(-11 1290 464)">10</text>
      <path d="M1368 420L1374 407L1460 390V602L1416 610L1401.500 602Q1408 580 1404 540Q1396 470 1368 420Z" fill="url(#grip)" />
      <path d="M1368 420L1374 407Q1404 450 1418 510Q1430 560 1423 609L1416 610L1401.500 602Q1408 580 1404 540Q1396 470 1368 420Z" fill="#8e8e8e" fillOpacity=".75" />
      <path d="M1375 407L1460 390V602L1423 608Q1430 560 1418 510Q1404 450 1375 407Z" fill="url(#knurl)" />
      <path d="M1375 407Q1404 450 1418 510Q1430 560 1423 608M1368 420L1374 407M1416 610L1401.500 602" fill="none" stroke="#444" />
      {/* graduations on the barrel */}
      <g fill="none" stroke={c.orange}>
        <ellipse cx="1220" cy="543" rx="20" ry="85" transform="rotate(-10 1220 543)" fill="url(#brass)" strokeWidth="4" />
        <ellipse cx="1099" cy="568" rx="19" ry="79" transform="rotate(-10 1099 568)" fill="url(#brass)" strokeWidth="4" />
        <Loop x={1096} y={568} rx={16} ry={66} a={-10} />
        <Loop x={1102} y={567} rx={18} ry={76} a={-10} w={2} />
        <path d="M1124 598L1230 578M1136 565L1139 593M1157.500 571L1160 589M1178 567L1181 586M1198.500 563L1201 582M1219.500 558L1222 578M1149.500 595V611M1170.500 592V607M1191 588V603M1211 585V600" strokeWidth="3.500" strokeLinecap="round" />
      </g>
      <text x="1121" y="556" fontFamily="Liberation Sans" fontWeight="700" fontSize="33" fill={c.orange} transform="rotate(-5 1130 545)">0</text>
      {/* highlighted threads */}
      <path d="M982 536L1030 524Q1050 570 1058 630L996 644Q978 600 982 536Z" fill={c.orange} />
      <path d="M1300 486L1410 464Q1418 500 1416 548L1316 566Q1296 530 1300 486Z" fill={c.orange} />
      <g fill="none" stroke={c.orange}>
        <Loop x={976} y={590} rx={17} ry={62} w={5} />
        {seq(9).map(i => <Loop key={i} x={979 + i * 10} y={590 - i * 2} rx={15} ry={61} w={i < 7 ? 4 : 3} />)}
        {seq(8).map(i => <Loop key={i} x={985 + i * 10} y={589 - i * 2} rx={14} ry={62} w={3} />)}
        <Loop x={1065} y={571} rx={12} ry={63} a={-13} w={3} />
        <path d="M1026 517L1029 501L1043 486L1050 494L1062 527L1075 567L1080 603L1080.500 660L1075 670L1053 642" strokeWidth="2.500" />
        <Loop x={1217} y={545} rx={15} ry={64} a={-11} w={4} />
        <Loop x={1221} y={543} rx={12} ry={54} a={-12} w={3} />
        <Loop x={1223} y={542} rx={20} ry={82} a={-10} w={2} />
        {seq(25).map(i => <Loop key={i} x={1240 + i * 10} y={538 - i * 1.75} rx={11} ry={49} w={i > 4 && i < 18 ? 4 : 3} />)}
        {seq(24).map(i => <Loop key={i} x={1245 + i * 10} y={537 - i * 1.75} rx={6} ry={47} w={3} />)}
        <Loop x={1300} y={527} rx={15} ry={64} />
        <Loop x={1340} y={520} rx={18} ry={79} a={-11} />
        <Loop x={1342} y={518} rx={16} ry={70} a={-11} w={2} />
        <Loop x={1395} y={509} rx={17} ry={70} a={-11} />
        <Loop x={1398} y={508} rx={15} ry={65} a={-11} w={2} />
      </g>
      <path d="M1296 500L1299 518M1318 520L1322 552M1329 515L1333 555M1340 510L1344 550M1350 508L1354 545M1360 506L1364 545M1371 505L1375 540M1390 500L1396 535" stroke="#ddd0c0" strokeWidth="1.500" fill="none" />
      <path d="M970 545Q969 590 978 630" stroke="#c9b8a4" strokeWidth="2" fill="none" strokeDasharray="40 6" />
      <path d="M992 529V532M1002 527V530M1012 525V528M1022 523V526M1000 546V551M1012 544V549M1022 542V547M1008 634V639M1018 632V637M1028 630V635M1048 612V624" stroke="#2a2a2a" strokeWidth="1.500" strokeLinecap="round" />
      {/* view triad */}
      <path d="M921.500 786.500L961.500 779L974 796L977 833.500L936.500 841.500L924.500 825ZM921.500 786.500L933.500 803.500L974 796M933.500 803.500L936.500 841.500" fill="none" stroke="#a9a9a9" />
      <path d="M947.500 792L945.500 762" stroke="#8e2024" strokeWidth="4.500" />
      <path d="M943.500 745L950.500 762Q945 766 940 763Z" fill="#a1262a" />
      <path d="M929.500 814.500L899 820" stroke="#2f9a33" strokeWidth="4.500" />
      <path d="M879 824L897.500 816Q901 820 900 825Z" fill="#34a038" />
      <path d="M955 818L965 831" stroke="#0b45e6" strokeWidth="4.500" strokeLinecap="round" />
      <path d="M960 832L967 825.500Q971 830 970 839Q963 837 960 832Z" fill="#0d49f0" />
      <g fontFamily="Open Sans" fontSize="12">
        <text x="939" y="740" fill="#d42c2c">X</text>
        <text x="867" y="830" fill="#2f9a33">Y</text>
        <text x="969" y="848" fill="#0d49f0">Z</text>
      </g>
    </g>
  </Scene>
);

const Graphics = () => (
  <View>
    <Tabs>
      <Tab $on>
        <button><Bracket w={16} />EPD02.prt</button>
        <Pin />
        <button aria-label="关闭"><Ico w={10}><path d="M1.500 1.500L8.500 8.500M8.500 1.500L1.500 8.500" stroke="#111" strokeWidth="2" /></Ico></button>
      </Tab>
      <Tab>
        <button><Bracket w={16} />assembly1.prt</button>
        <Pin />
      </Tab>
    </Tabs>
    <Canvas>
      <Model />
      <Mark>
        <span>UG<b>爱好者论坛</b></span>
        <span>WWW.UGSNX.COM</span>
      </Mark>
    </Canvas>
  </View>
);

/* ---------- floating menus and notes ---------- */

const MiniBar = styled.div`
  position: absolute;
  left: 176px;
  top: 295px;
  display: flex;
  align-items: center;
  gap: 5px;
  height: 38px;
  padding: 0 5px;
  background: #fff;
  border: 1px solid ${c.line};
  button { display: flex; align-items: center; justify-content: center; width: 26px; height: 26px; }
`;
const Popup = styled.div`
  position: absolute;
  left: 176px;
  top: 338px;
  width: 152px;
  padding: 2px;
  background: #fff;
  border: 1px solid ${c.line};
  box-shadow: 3px 3px 3px rgba(0, 0, 0, 0.6);
`;
const Item = styled.button<{ $on?: boolean }>`
  display: flex;
  align-items: center;
  width: 100%;
  height: 24px;
  padding-bottom: 2px;
  white-space: nowrap;
  background: ${p => (p.$on ? '#e8e8e3' : 'none')};
`;
const ItemIcon = styled.span`
  display: flex;
  justify-content: center;
  flex: none;
  width: 24px;
  margin-right: 2px;
`;
const Sep = styled.hr`
  height: 1px;
  margin: 3px 10px 5px;
  border: 0;
  background: ${c.line};
`;
const RedFrame = styled.div`
  position: absolute;
  left: 180px;
  top: 477px;
  width: 112px;
  height: 28px;
  border: 4px solid #fd0d02;
  border-radius: 2px;
  pointer-events: none;
`;
const Note = styled.p`
  position: absolute;
  left: 686px;
  top: 278px;
  margin: 0;
  font-size: 28px;
  line-height: 40px;
  font-weight: 700;
  white-space: nowrap;
  color: #fd0d02;
  text-shadow: 2px 0 1px #fff, -2px 0 1px #fff, 0 2px 1px #fff, 0 -2px 1px #fff, 2px 2px 1px #fff, -2px -2px 1px #fff, 2px -2px 1px #fff, -2px 2px 1px #fff;
`;

const Suppress = ({ w }: { w: number }) => (
  <Ico w={w} vb="0 0 26 26">
    <path d="M1 16L13 10L25 15V18L13 25L1 19Z" fill="#6b6b6b" /><path d="M1 16L13 10L25 15L13 21Z" fill="#cfcfcf" />
    <path d="M7 4V13Q13 17 19 13V4" fill="#f6d9c4" fillOpacity=".85" stroke="#c25a1a" strokeWidth="1.3" />
    <ellipse cx="13" cy="4" rx="6" ry="3" fill="#fbe9dc" stroke="#c25a1a" strokeWidth="1.3" />
    <path d="M7 10Q13 14 19 10" stroke="#c25a1a" />
  </Ico>
);
const Cross = ({ w }: { w: number }) => <Ico w={w} vb="0 0 16 16"><path d="M2 2L14 14M14 2L2 14" /></Ico>;

const Menus = () => (
  <>
    <MiniBar>
      <button aria-label="抑制"><Suppress w={25} /></button>
      <button aria-label="隐藏">
        <Ico w={26}><path d="M2 13Q13 2 24 13Q13 24 2 13ZM4 23L23 3" strokeWidth="1.3" /><circle cx="13" cy="13" r="4.500" strokeWidth="1.3" /></Ico>
      </button>
      <button aria-label="删除"><Cross w={24} /></button>
    </MiniBar>
    <Popup role="menu">
      <Item role="menuitem"><ItemIcon />设为驱动</Item>
      <Item role="menuitem"><ItemIcon><Suppress w={17} /></ItemIcon>抑制</Item>
      <Item role="menuitem"><ItemIcon><Ico w={16}><path d="M1 8Q8 -1 15 8Q8 17 1 8Z" strokeWidth="1.2" /><circle cx="8" cy="8" r="3.200" fill="#444" /></Ico></ItemIcon>显示</Item>
      <Sep />
      <Item role="menuitem"><ItemIcon><Cross w={18} /></ItemIcon>删除</Item>
      <Sep />
      <Item role="menuitem"><ItemIcon />加载受约束的几何体</Item>
      <Item role="menuitemcheckbox" aria-checked="true" $on><ItemIcon><Ico w={12}><path d="M1 6L4 9L9 3" stroke={c.ink} strokeWidth="2" /></Ico></ItemIcon>特定于布置</Item>
      <Item role="menuitem"><ItemIcon><Ico w={16}><rect x=".5" y=".5" width="12" height="12" fill="#f5921f" stroke="#b35c0a" /><circle cx="11.500" cy="11.500" r="4" fill="#fff" stroke="#222" /><path d="M11.500 9V10M11.500 11V14" stroke="#222" /></Ico></ItemIcon>信息</Item>
    </Popup>
    <RedFrame />
    <Note>选中所有约束，把特定于布置勾选</Note>
  </>
);

export default function App() {
  return (
    <Shell>
      <Global />
      <RibbonBar />
      <Toolbar />
      <Main>
        <RailBar />
        <Navigator />
        <Graphics />
      </Main>
      <Menus />
    </Shell>
  );
}
